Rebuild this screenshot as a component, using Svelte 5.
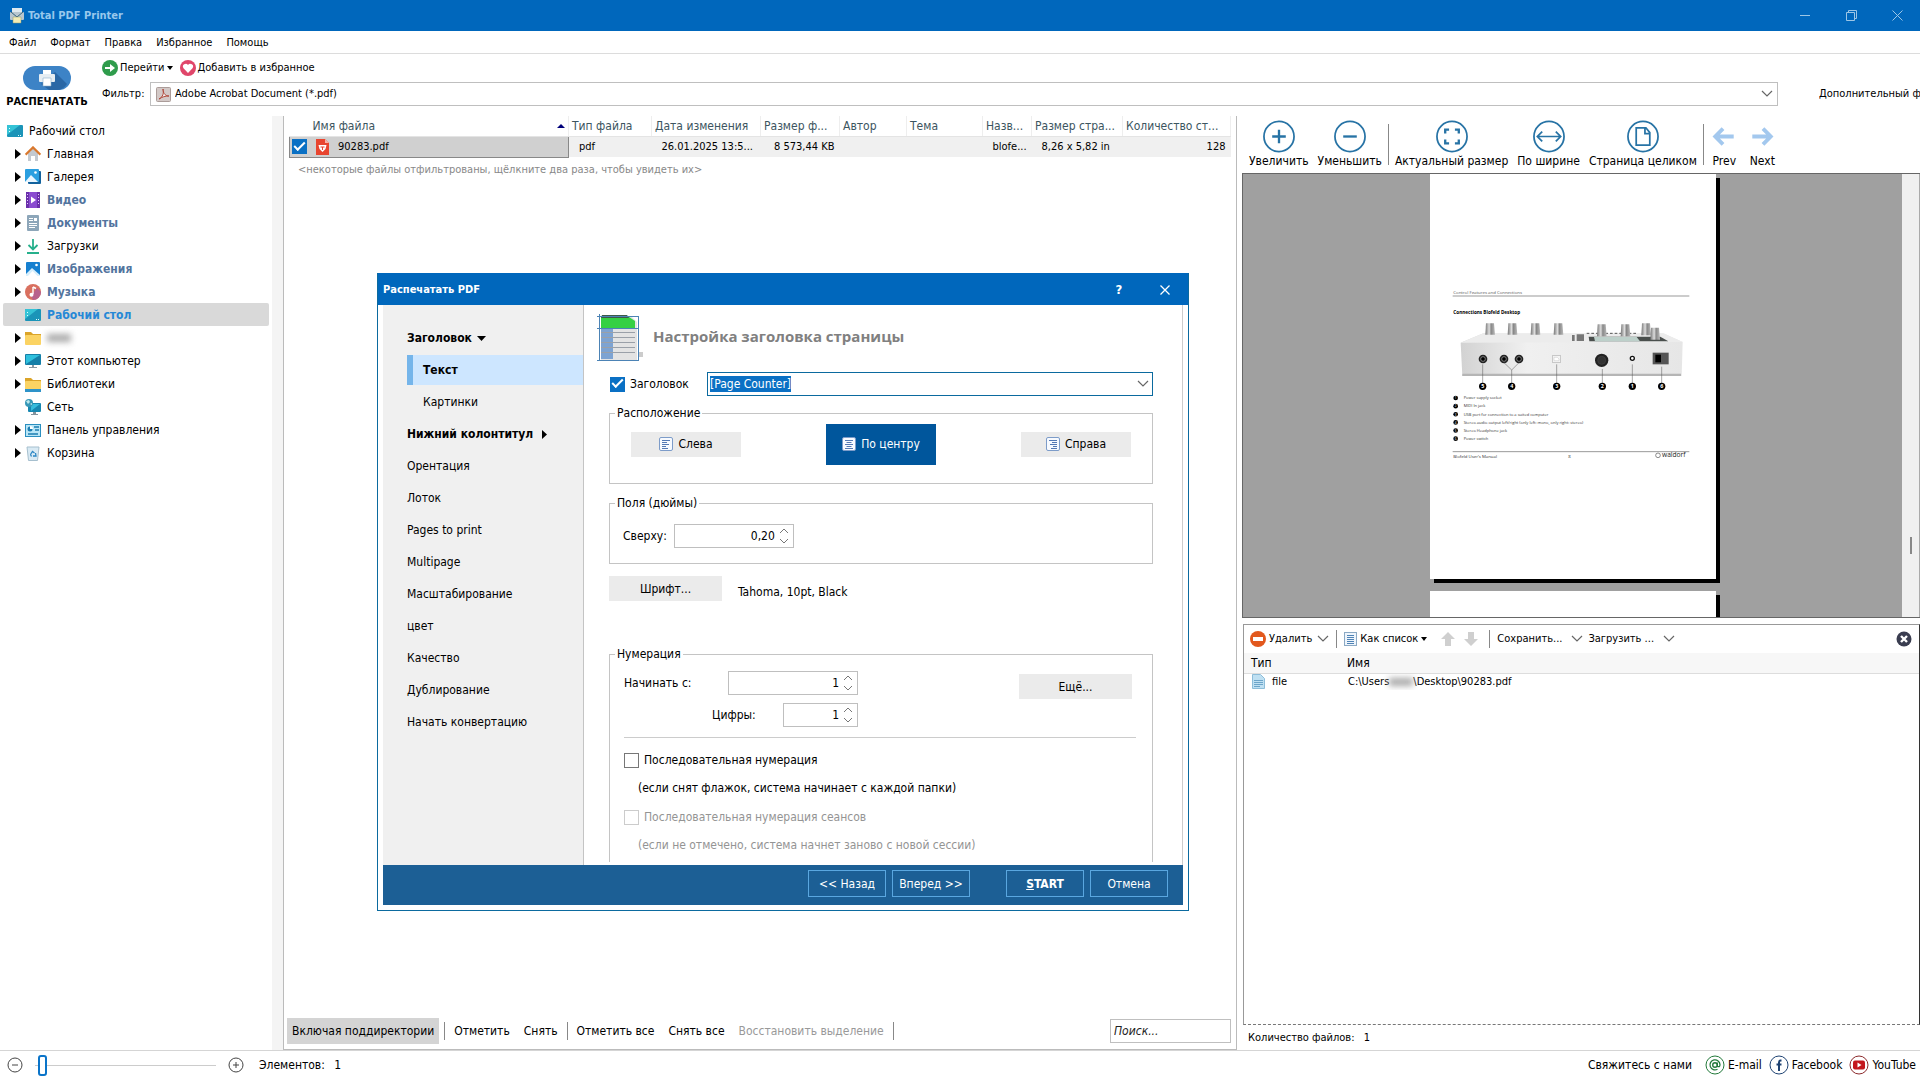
<script lang="ts">
    import { onMount } from 'svelte'

    const menu = ['Файл', 'Формат', 'Правка', 'Избранное', 'Помощь']

    const tree = [
        { label: 'Главная', icon: 'home', arrow: true },
        { label: 'Галерея', icon: 'gallery', arrow: true },
        { label: 'Видео', icon: 'video', arrow: true, bold: true },
        { label: 'Документы', icon: 'docs', arrow: true, bold: true },
        { label: 'Загрузки', icon: 'download', arrow: true },
        { label: 'Изображения', icon: 'image', arrow: true, bold: true },
        { label: 'Музыка', icon: 'music', arrow: true, bold: true },
        { label: 'Рабочий стол', icon: 'desktop', bold: true },
        { label: '', icon: 'folder', arrow: true },
        { label: 'Этот компьютер', icon: 'pc', arrow: true },
        { label: 'Библиотеки', icon: 'library', arrow: true },
        { label: 'Сеть', icon: 'network' },
        { label: 'Панель управления', icon: 'control', arrow: true },
        { label: 'Корзина', icon: 'bin', arrow: true },
    ]

    const pages = [
        'Орентация',
        'Лоток',
        'Pages to print',
        'Multipage',
        'Масштабирование',
        'цвет',
        'Качество',
        'Дублирование',
        'Начать конвертацию',
    ]

    const zoomTools = [
        { label: 'Увеличить', icon: 'plus' },
        { label: 'Уменьшить', icon: 'minus' },
        { label: 'Актуальный размер', icon: 'actual' },
        { label: 'По ширине', icon: 'width' },
        { label: 'Страница целиком', icon: 'page' },
    ]

    const notes = [
        'Power supply socket',
        'MIDI In jack',
        'USB port for connection to a suited computer',
        'Stereo audio output left/right (only left: mono, only right: stereo)',
        'Stereo Headphone jack',
        'Power switch',
    ]

    const callouts = [
        [248, 5, 283],
        [335, 4, 300],
        [470, 3, 283],
        [607, 2, 297],
        [697, 1, 283],
        [785, 6, 290],
    ]

    let selected = $state(7)
    let align = $state('center')
    let header = $state('[Page Counter]')
    let headerInput: HTMLInputElement

    onMount(() => {
        headerInput.focus()
        headerInput.select()
    })
</script>

{#snippet chevron()}
    <svg width="12" height="8" viewBox="0 0 12 8"><path d="M1 1l5 5 5-5" fill="none" stroke="#666" stroke-width="1.2" /></svg>
{/snippet}

{#snippet caret()}
    <svg width="6" height="4" viewBox="0 0 6 4"><path d="M0 0h6L3 4z" fill="#000" /></svg>
{/snippet}

{#snippet treeIcon(name: string)}
    <svg class="ico" width="16" height="16" viewBox="0 0 16 16">
        {#if name == 'home'}
            <path d="M3 7l5-5 5 5v8H10V10H6v5H3z" fill="#c3c9d0" />
            <path d="M0.6 8.6L8 1.4l7.4 7.2" fill="none" stroke="#d9782d" stroke-width="2.2" />
        {:else if name == 'gallery'}
            <rect x="3" y="2" width="13" height="13" rx="1" fill="#12629d" />
            <rect x="0" y="0" width="14" height="13" rx="1" fill="#2b9fe0" />
            <path d="M0 13l6-7 7 7z" fill="#e9f6ff" />
            <circle cx="10.500" cy="3.500" r="1.300" fill="#fff" />
        {:else if name == 'video'}
            <rect x="1" y="0" width="14" height="16" rx="1" fill="#8a4bd0" />
            <path d="M1 0h3v16H1zM12 0h3v16h-3z" fill="#6a30ab" />
            <path d="M2 2h1v1H2zM2 5h1v1H2zM2 8h1v1H2zM2 11h1v1H2zM13 2h1v1h-1zM13 5h1v1h-1zM13 8h1v1h-1zM13 11h1v1h-1z" fill="#e3ccfa" />
            <path d="M6 4.500l5 3.500-5 3.500z" fill="#fff" />
        {:else if name == 'docs'}
            <rect x="2" y="0" width="12" height="16" rx="1" fill="#8da6b9" />
            <path d="M4 3h4v1H4zM4 5h4v1H4zM9 3h3v3H9zM4 8h8v1H4zM4 10h8v1H4zM4 12h6v1H4z" fill="#fff" />
        {:else if name == 'download'}
            <path d="M8 1v10M3.500 7L8 11.500 12.500 7M2 15h12" fill="none" stroke="#26b08c" stroke-width="1.8" />
        {:else if name == 'image'}
            <rect x="1" y="1" width="14" height="14" rx="1" fill="#1680d0" />
            <path d="M1 15v-2l6-6 8 7v1z" fill="#d8effc" />
            <path d="M3 15l4.500-5 5 5z" fill="#fff" />
            <circle cx="11.500" cy="4" r="1.300" fill="#fff" />
        {:else if name == 'music'}
            <circle cx="8" cy="8" r="8" fill="#d9705f" />
            <path d="M8 16a8 8 0 0 0 8-8l-4-4-6 8z" fill="#b7618c" />
            <path d="M8 3v7" stroke="#fff" stroke-width="1.400" />
            <path d="M8 3l3 1.500" stroke="#fff" stroke-width="1.600" />
            <circle cx="6.500" cy="10.800" r="2" fill="#fff" />
        {:else if name == 'desktop'}
            <rect x="0" y="2" width="16" height="12" rx="1" fill="#1b94b8" />
            <path d="M0 3q0-1 1-1h12L0 12z" fill="#35c3d6" />
            <path d="M2 5h1v1H2zM2 8h1v1H2zM11 12h1v1h-1zM13 12h1v1h-1z" fill="#dff" />
        {:else if name == 'folder' || name == 'library'}
            <path d="M0 2h6l2 2h8v10H0z" fill="#dba429" />
            <rect x="0" y="5" width="16" height="10" rx="1" fill="#fbd363" />
            {#if name == 'library'}<rect x="0" y="13" width="16" height="3" fill="#2e93c9" />{/if}
        {:else if name == 'pc'}
            <rect x="0" y="1" width="16" height="11" rx="1" fill="#157fa8" />
            <path d="M1 2h14L1 11z" fill="#2fc0dd" />
            <path d="M7 12h2v2h3v1H4v-1h3z" fill="#8a99a3" />
        {:else if name == 'network'}
            <rect x="3" y="4" width="13" height="9" rx="1" fill="#1787b1" />
            <path d="M6 5h9l-9 7z" fill="#37bcdc" />
            <path d="M8 13h3v2H8zM6 15h7v1H6z" fill="#84949e" />
            <circle cx="4" cy="4" r="4" fill="#3798b8" />
            <path d="M1 2l3-1 1 2-2 2zM5 5l2-1v2z" fill="#bce8ec" />
        {:else if name == 'control'}
            <rect x="0.500" y="2.500" width="15" height="12" fill="#b9e6f7" stroke="#2b8fc0" />
            <circle cx="5" cy="7" r="2.500" fill="#1c7db1" />
            <path d="M5 7V4a3 3 0 0 1 3 3z" fill="#fff" />
            <path d="M9 5h5M10 8h4M3 12h10" stroke="#1c7db1" stroke-width="1.300" />
        {:else}
            <path d="M2 2l1.500 13.500h9L14 2z" fill="#d9eaf4" stroke="#a6bfce" />
            <path d="M5.500 9.500l2-3 2 1.500M10.500 8l.500 3H8M6.500 11.500l-1-2" fill="none" stroke="#2a86c4" stroke-width="1.300" />
        {/if}
    </svg>
{/snippet}

{#snippet printer()}
    <path d="M4 0h8v5H4z" fill="#fff" />
    <rect x="0" y="4" width="16" height="8" rx="1" fill="#e6edf2" />
    <path d="M4 8h8v8H4z" fill="#fff" stroke="#8fb0ca" stroke-width="0.600" />
{/snippet}

{#snippet zoomIcon(name: string)}
    <svg width="34" height="33" viewBox="0 0 34 34" fill="none" stroke="#2773a5" stroke-width="1.800">
        <circle cx="17" cy="17" r="15.500" />
        {#if name == 'plus'}
            <path d="M10 17h14M17 10v14" stroke-width="2.400" />
        {:else if name == 'minus'}
            <path d="M10 17h14" stroke-width="2.400" />
        {:else if name == 'actual'}
            <path d="M10 14v-4h4M20 10h4v4M24 20v4h-4M14 24h-4v-4" stroke-width="2.400" />
        {:else if name == 'width'}
            <path d="M6 17h22M10 12l-5 5 5 5M24 12l5 5-5 5" />
        {:else}
            <path d="M10 8h10l4 5v13H10zM19 8v6h5" />
        {/if}
    </svg>
{/snippet}

{#snippet alignIcon(name: string)}
    <svg width="14" height="14" viewBox="0 0 14 14">
        <rect x="0.500" y="0.500" width="13" height="13" rx="1.500" fill="#f7faff" stroke="#7d9cc9" />
        {#if name == 'left'}
            <path d="M3 3.500h8M3 5.500h5M3 7.500h7M3 9.500h4M3 11.500h6" stroke="#5479b4" />
        {:else if name == 'center'}
            <path d="M3 3.500h8M4.500 5.500h5M3 7.500h8M4.500 9.500h5M3 11.500h8" stroke="#5479b4" />
        {:else}
            <path d="M3 3.500h8M6 5.500h5M4 7.500h7M7 9.500h4M5 11.500h6" stroke="#5479b4" />
        {/if}
    </svg>
{/snippet}

{#snippet spinner(id: string, value: string, size: string)}
    <span class="spin {size}">
        <input {id} type="text" {value} />
        <span class="steps">
            <button aria-label="Больше"><svg width="10" height="6" viewBox="0 0 10 6"><path d="M1 5l4-4 4 4" /></svg></button>
            <button aria-label="Меньше"><svg width="10" height="6" viewBox="0 0 10 6"><path d="M1 1l4 4 4-4" /></svg></button>
        </span>
    </span>
{/snippet}

<div class="app">
    <header class="titlebar">
        <svg width="16" height="16" viewBox="0 0 16 16">
            <path d="M3 0h10v5H3z" fill="#dfe9ef" />
            <rect x="1" y="4" width="14" height="8" rx="1" fill="#b8c6cf" />
            <path d="M2 4l6 5 6-5" fill="none" stroke="#35647f" />
            <path d="M4 9h8v6H4z" fill="#f3ecb5" stroke="#8e9a6c" stroke-width="0.500" />
        </svg>
        <span class="title">Total PDF Printer</span>
        <div class="winbtns">
            <button aria-label="Свернуть"><svg width="11" height="11" viewBox="0 0 11 11"><path d="M0 5.500h10" /></svg></button>
            <button aria-label="Развернуть"><svg width="11" height="11" viewBox="0 0 11 11"><path d="M0.500 2.500h8v8h-8zM2.500 2.500v-2h8v8h-2" /></svg></button>
            <button aria-label="Закрыть"><svg width="11" height="11" viewBox="0 0 11 11"><path d="M0.500 0.500l10 10M10.500 0.500l-10 10" /></svg></button>
        </div>
    </header>

    <nav class="menubar">
        {#each menu as item}
            <button>{item}</button>
        {/each}
    </nav>

    <section class="toolbar">
        <button class="print">
            <svg width="48" height="24" viewBox="0 0 48 24">
                <rect width="48" height="24" rx="12" fill="#3d83c6" />
                <path d="M32 6l12 12q-4 6-10 6h-8l-8-6z" fill="#2a67a5" />
                <g transform="translate(16 4)">{@render printer()}</g>
            </svg>
            <b>РАСПЕЧАТАТЬ</b>
        </button>
        <div class="tools">
            <div class="quick">
                <button>
                    <svg width="16" height="16" viewBox="0 0 16 16"><circle cx="8" cy="8" r="8" fill="#2f9c4c" /><path d="M3 7h5V4l5 4-5 4V9H3z" fill="#fff" /></svg>
                    Перейти {@render caret()}
                </button>
                <button>
                    <svg width="16" height="16" viewBox="0 0 16 16"><circle cx="8" cy="8" r="8" fill="#e0466a" /><path d="M8 13L3.500 8.200a2.700 2.700 0 0 1 4.500-3.200 2.700 2.700 0 0 1 4.500 3.200z" fill="#fff" /></svg>
                    Добавить в избранное
                </button>
            </div>
            <div class="filter">
                <label for="filter">Фильтр:</label>
                <div class="combo">
                    <svg width="15" height="15" viewBox="0 0 15 15">
                        <rect x="0.500" y="0.500" width="14" height="14" rx="1" fill="#d3c9c7" stroke="#ab9c99" />
                        <path d="M3 12c4-2 5-6 4-10 0 5 3 7 6 7-4 0-7 1-10 3z" fill="#f4eeee" stroke="#b04a3c" />
                    </svg>
                    <select id="filter"><option>Adobe Acrobat Document (*.pdf)</option></select>
                    {@render chevron()}
                </div>
                <button class="extra">Дополнительный фильтр</button>
            </div>
        </div>
    </section>

    <main>
        <aside class="tree">
            <button class="root">{@render treeIcon('desktop')}<span>Рабочий стол</span></button>
            {#each tree as item, i}
                <button class:sel={selected == i} class:bold={item.bold} onclick={() => (selected = i)}>
                    <span class="arrow">
                        {#if item.arrow}<svg width="6" height="10" viewBox="0 0 6 10"><path d="M0 0l6 5-6 5z" /></svg>{/if}
                    </span>
                    {@render treeIcon(item.icon)}
                    {#if item.label}<span>{item.label}</span>{:else}<span class="smudge"></span>{/if}
                </button>
            {/each}
        </aside>
        <div class="splitter"></div>

        <section class="files">
            <table>
                <colgroup>
                    <col class="c-name" /><col class="c-type" /><col class="c-date" /><col class="c-size" /><col class="c-author" />
                    <col class="c-theme" /><col class="c-title" /><col class="c-page" /><col />
                </colgroup>
                <thead>
                    <tr>
                        <th>Имя файла <svg width="8" height="4" viewBox="0 0 8 4"><path d="M0 4l4-4 4 4z" fill="#00007a" /></svg></th>
                        <th>Тип файла</th>
                        <th>Дата изменения</th>
                        <th>Размер ф...</th>
                        <th>Автор</th>
                        <th>Тема</th>
                        <th>Назв...</th>
                        <th>Размер стра...</th>
                        <th>Количество ст...</th>
                    </tr>
                </thead>
                <tbody>
                    <tr>
                        <td>
                            <label class="file">
                                <input type="checkbox" class="check" checked />
                                <svg width="13" height="16" viewBox="0 0 13 16">
                                    <path d="M0 0h9l4 4v12H0z" fill="#e8452f" /><path d="M9 0l4 4H9z" fill="#f7b3a8" />
                                    <path d="M2.500 6h8l-1 4-3 3-3-3z" fill="#fff" /><path d="M4.500 8h4M6.500 8v3" stroke="#e8452f" />
                                </svg>
                                90283.pdf
                            </label>
                        </td>
                        <td>pdf</td>
                        <td>26.01.2025 13:5...</td>
                        <td class="num">8 573,44 KB</td>
                        <td></td>
                        <td></td>
                        <td>blofe...</td>
                        <td>8,26 x 5,82 in</td>
                        <td class="num">128</td>
                    </tr>
                </tbody>
            </table>
            <p class="hint">&lt;некоторые файлы отфильтрованы, щёлкните два раза, чтобы увидеть их&gt;</p>

            <div class="listbar">
                <button class="pressed">Включая поддиректории</button>
                <i></i>
                <button>Отметить</button>
                <button>Снять</button>
                <i></i>
                <button>Отметить все</button>
                <button>Снять все</button>
                <button disabled>Восстановить выделение</button>
                <i></i>
                <input type="text" placeholder="Поиск..." aria-label="Поиск" />
            </div>
        </section>

        <section class="side">
            <div class="zoombar">
                {#each zoomTools as tool, i}
                    <button>{@render zoomIcon(tool.icon)}{tool.label}</button>
                    {#if i == 1 || i == 4}<i></i>{/if}
                {/each}
                <button class="step">
                    <svg width="24" height="33" viewBox="0 0 24 34"><path d="M11 9l-8 8 8 8M3 17h19" fill="none" stroke="#a3c8ee" stroke-width="4" /></svg>Prev
                </button>
                <button class="step">
                    <svg width="24" height="33" viewBox="0 0 24 34"><path d="M13 9l8 8-8 8M21 17H2" fill="none" stroke="#a3c8ee" stroke-width="4" /></svg>Next
                </button>
            </div>

            <div class="preview">
                <div class="sheets">
                    <svg class="sheet" width="286" height="405" viewBox="0 0 858 1215">
                        <defs>
                            <linearGradient id="case" x1="0" x2="1"><stop offset="0" stop-color="#d2d2d2" /><stop offset="0.300" stop-color="#f0f0f0" /><stop offset="1" stop-color="#e6e6e6" /></linearGradient>
                            <linearGradient id="knob" x1="0" x2="1"><stop offset="0" stop-color="#777" /><stop offset="0.400" stop-color="#ddd" /><stop offset="0.600" stop-color="#888" /><stop offset="1" stop-color="#bbb" /></linearGradient>
                        </defs>
                        <g transform="translate(-90 288)">
                            <text x="160" y="73" font-size="13" fill="#555">Control Features and Connections</text>
                            <path d="M158 78h710M158 545h710" stroke="#999" stroke-width="3" />
                            <text x="160" y="133" font-size="14" font-weight="bold">Connections Blofeld Desktop</text>
                            <path d="M182 218L250 190h540l58 26-3 102H187z" fill="url(#case)" />
                            <path d="M182 218L250 190h540l58 26z" fill="#ececec" />
                            <path d="M187 311h656v7H187z" fill="#b5b5b5" />
                            {#each [258, 325, 394, 463] as x}
                                <path d="M{x} 160h24l3 34h-29z" fill="url(#knob)" />
                            {/each}
                            <path d="M560 190h150" stroke="#555" stroke-width="3" stroke-dasharray="8 6" />
                            <path d="M516 195h8v18h-8zM530 193h22v20h-22z" fill="#777" />
                            <path d="M566 200h215l24 14H568z" fill="#4a4f4d" />
                            <path d="M582 201h128l10 13H585z" fill="#bdd0ca" />
                            {#each [[593, 163], [664, 163], [726, 160], [753, 173]] as [x, y]}
                                <path d="M{x} {y}h24l3 36h-29z" fill="url(#knob)" />
                            {/each}
                            {#each [249, 312, 357] as x}
                                <circle cx={x} cy="267" r="13" fill="#222" />
                                <circle cx={x} cy="267" r="7" fill="#000" stroke="#aaa" stroke-width="2" />
                            {/each}
                            <rect x="457" y="257" width="25" height="20" fill="#f4f4f4" stroke="#b5b5b5" stroke-width="2" />
                            <path d="M462 272v-10h10l5 5v5z" fill="#fff" stroke="#aaa" />
                            <circle cx="605" cy="271" r="20" fill="#222" />
                            <circle cx="605" cy="271" r="12" fill="#333" stroke="#444" stroke-width="2" />
                            <circle cx="697" cy="265" r="6" fill="#fff" stroke="#111" stroke-width="4" />
                            <rect x="758" y="248" width="48" height="35" fill="#555" />
                            <rect x="766" y="254" width="17" height="23" fill="#000" />
                            <path d="M312 278l23 22 22-22" fill="none" stroke="#555" stroke-width="1.500" />
                            {#each callouts as [x, n, top]}
                                <path d="M{x} {top}V340" stroke="#555" stroke-width="1.500" />
                                <circle cx={x} cy="349" r="11" />
                                <text {x} y="355" font-size="16" font-weight="bold" text-anchor="middle" fill="#fff">{n}</text>
                            {/each}
                            {#each notes as note, i}
                                <circle cx="167" cy={384 + i * 24.4} r="7" />
                                <text x="167" y={388 + i * 24.4} font-size="9" text-anchor="middle" fill="#fff">{i + 1}</text>
                                <text x="191" y={388 + i * 24.4} font-size="12" fill="#333">{note}</text>
                            {/each}
                            <text x="160" y="564" font-size="13" fill="#333">Blofeld User’s Manual</text>
                            <text x="505" y="564" font-size="13" fill="#333">8</text>
                            <circle cx="774" cy="556" r="7" fill="none" stroke="#555" stroke-width="2" />
                            <text x="786" y="562" font-size="20" fill="#222">waldorf</text>
                        </g>
                    </svg>
                    <div class="sheet next"></div>
                </div>
                <div class="scroll"><span></span></div>
            </div>

            <div class="queue">
                <div class="queuebar">
                    <button>
                        <svg width="16" height="16" viewBox="0 0 16 16"><circle cx="8" cy="8" r="8" fill="#e2581d" /><rect x="3" y="6" width="10" height="4" fill="#fff" /></svg>
                        Удалить
                    </button>
                    {@render chevron()}
                    <i></i>
                    <button>
                        <svg width="13" height="14" viewBox="0 0 13 14"><rect x="0.500" y="0.500" width="12" height="13" fill="#eef5fc" stroke="#8ba9c4" /><path d="M3 3.500h7M3 5.500h7M3 7.500h7M3 9.500h7M3 11.500h7" stroke="#4f83b6" /></svg>
                        Как список{@render caret()}
                    </button>
                    <div class="moves">
                        <button aria-label="Вверх"><svg width="14" height="14" viewBox="0 0 14 14"><path d="M7 0l7 7h-4v7H4V7H0z" fill="#cfcfcf" /></svg></button>
                        <button aria-label="Вниз"><svg width="14" height="14" viewBox="0 0 14 14"><path d="M7 14l7-7h-4V0H4v7H0z" fill="#cfcfcf" /></svg></button>
                    </div>
                    <i></i>
                    <button class="drop">Сохранить...</button>
                    {@render chevron()}
                    <button class="drop">Загрузить ...</button>
                    {@render chevron()}
                    <button class="close" aria-label="Закрыть">
                        <svg width="16" height="16" viewBox="0 0 16 16"><circle cx="8" cy="8" r="7.500" fill="#3a3d50" /><path d="M5 5l6 6M11 5l-6 6" stroke="#fff" stroke-width="2.400" /></svg>
                    </button>
                </div>
                <table>
                    <thead><tr><th class="q-type">Тип</th><th>Имя</th></tr></thead>
                    <tbody>
                        <tr>
                            <td>
                                <span class="qfile">
                                    <svg width="13" height="15" viewBox="0 0 13 15"><path d="M0.500 0.500h8l4 4v10h-12z" fill="#bfe0f2" stroke="#8dbdd9" /><path d="M2 6.500h9M2 8.500h9M2 10.500h9M2 12.500h6" stroke="#6da5c9" /></svg>
                                    file
                                </span>
                            </td>
                            <td><span class="path">C:\Users<span class="smudge"></span>\Desktop\90283.pdf</span></td>
                        </tr>
                    </tbody>
                </table>
            </div>
            <p class="count">Количество файлов: <span>1</span></p>
        </section>
    </main>

    <footer class="status">
        <svg width="16" height="16" viewBox="0 0 16 16" fill="none" stroke="#444"><circle cx="8" cy="8" r="7" /><path d="M5 8h6" /></svg>
        <input type="range" min="0" max="100" value="2" aria-label="Масштаб" />
        <svg width="16" height="16" viewBox="0 0 16 16" fill="none" stroke="#444"><circle cx="8" cy="8" r="7" /><path d="M5 8h6M8 5v6" /></svg>
        <span class="items">Элементов: <span>1</span></span>
        <div class="contact">
            <span class="lead">Свяжитесь с нами</span>
            <a href="#email">
                <svg width="20" height="20" viewBox="0 0 20 20"><circle cx="10" cy="10" r="9" fill="#fff" stroke="#237a3b" /><circle cx="10" cy="10" r="2.300" fill="none" stroke="#237a3b" stroke-width="1.400" /><path d="M12.300 7.500v3.700q2.500 1.500 2.700-1.500a5 5 0 1 0-2.500 4.500" fill="none" stroke="#237a3b" stroke-width="1.300" /></svg>
                E-mail
            </a>
            <a href="#facebook">
                <svg width="20" height="20" viewBox="0 0 20 20"><circle cx="10" cy="10" r="9" fill="#fff" stroke="#1e4272" /><path d="M12.500 5.500h-1q-1.500 0-1.500 2V16M7.500 9.500h5" fill="none" stroke="#1e4272" stroke-width="2" /></svg>
                Facebook
            </a>
            <a href="#youtube">
                <svg width="20" height="20" viewBox="0 0 20 20"><circle cx="10" cy="10" r="9" fill="#fff" stroke="#8c2a2c" /><rect x="4" y="5.500" width="12" height="9" rx="2" fill="#c4161c" /><path d="M8.500 7.500l4 2.500-4 2.500z" fill="#fff" /></svg>
                YouTube
            </a>
        </div>
    </footer>

    <div class="dialog" role="dialog" aria-label="Распечатать PDF">
        <div class="caption">
            <b>Распечатать PDF</b>
            <button aria-label="Справка"><b>?</b></button>
            <button aria-label="Закрыть"><svg width="10" height="10" viewBox="0 0 10 10"><path d="M0.500 0.500l9 9M9.500 0.500l-9 9" stroke="#fff" stroke-width="1.300" /></svg></button>
        </div>
        <div class="body">
            <nav>
                <button class="group">Заголовок <svg width="9" height="5" viewBox="0 0 9 5"><path d="M0 0h9L4.500 5z" /></svg></button>
                <button class="sub active">Текст</button>
                <button class="sub">Картинки</button>
                <button class="group wide">Нижний колонтитул <svg width="5" height="9" viewBox="0 0 5 9"><path d="M0 0l5 4.500L0 9z" /></svg></button>
                {#each pages as page}
                    <button>{page}</button>
                {/each}
            </nav>
            <div class="pane">
                <div class="heading">
                    <svg width="47" height="48" viewBox="0 0 47 48">
                        <path d="M4 2h30l6 6v38H4z" fill="#e3e3e3" />
                        <path d="M4 14h12v31H4z" fill="#7da3d2" />
                        <path d="M4 14V3l4-2h21l9 6v7z" fill="#35d044" />
                        <path d="M5 1h25l2 3H4z" fill="#3d5a48" />
                        <path d="M4 18.500h34M4 23.500h34M4 28.500h34M4 33.500h34M4 38.500h34" stroke="#9aa0a8" />
                        <path d="M41 38h5v5h-5z" fill="#ccc" />
                        <path d="M2.500 0v47M41.500 2v45M0 2.500h42M0 14.500h42M0 46.500h42" fill="none" stroke="#4c83b5" />
                    </svg>
                    <h2>Настройка заголовка страницы</h2>
                </div>
                <div class="enable">
                    <label><input type="checkbox" class="check" checked />Заголовок</label>
                    <div class="combo focus">
                        <input type="text" bind:this={headerInput} bind:value={header} aria-label="Текст заголовка" />
                        <button aria-label="Список">{@render chevron()}</button>
                    </div>
                </div>

                <fieldset class="place">
                    <legend>Расположение</legend>
                    <div class="choices">
                        <button class:on={align == 'left'} onclick={() => (align = 'left')}>{@render alignIcon('left')}Слева</button>
                        <button class:on={align == 'center'} onclick={() => (align = 'center')}>{@render alignIcon('center')}По центру</button>
                        <button class:on={align == 'right'} onclick={() => (align = 'right')}>{@render alignIcon('right')}Справа</button>
                    </div>
                </fieldset>

                <fieldset class="margins">
                    <legend>Поля (дюймы)</legend>
                    <div class="margin">
                        <label for="top">Сверху:</label>
                        {@render spinner('top', '0,20', 'mid')}
                    </div>
                </fieldset>

                <div class="font">
                    <button class="flat">Шрифт...</button>
                    <span>Tahoma, 10pt, Black</span>
                </div>

                <fieldset class="numbering">
                    <legend>Нумерация</legend>
                    <div class="inside">
                        <div class="rows">
                            <div class="fields">
                                <div class="line"><label for="start">Начинать с:</label>{@render spinner('start', '1', 'big')}</div>
                                <div class="line"><label for="digits" class="inner">Цифры:</label>{@render spinner('digits', '1', 'small')}</div>
                            </div>
                            <button class="flat">Ещё...</button>
                        </div>
                        <hr />
                        <label class="opt"><input type="checkbox" class="check" />Последовательная нумерация</label>
                        <p>(если снят флажок, система начинает с каждой папки)</p>
                        <label class="opt off"><input type="checkbox" class="check" disabled />Последовательная нумерация сеансов</label>
                        <p class="off">(если не отмечено, система начнет заново с новой сессии)</p>
                    </div>
                </fieldset>
            </div>
        </div>
        <div class="actions">
            <button>&lt;&lt; Назад</button>
            <button>Вперед &gt;&gt;</button>
            <button class="start"><u>S</u>TART</button>
            <button>Отмена</button>
        </div>
    </div>
</div>

<style>
    :global(body) {
        overflow: hidden;
        background: #fff;
    }

    .app {
        position: relative;
        display: flex;
        flex-direction: column;
        height: 100vh;
        overflow: hidden;
        font: 12px/16px 'DejaVu Sans Condensed', 'Noto Sans', sans-serif;
        color: #000;
    }

    .app * {
        box-sizing: border-box;
    }

    button,
    input,
    select {
        font: inherit;
        color: inherit;
    }

    button {
        display: flex;
        align-items: center;
        margin: 0;
        padding: 0;
        border: 0;
        background: none;
        white-space: nowrap;
    }

    svg {
        flex: none;
        display: block;
    }

    p,
    h2 {
        margin: 0;
    }

    .titlebar {
        display: flex;
        align-items: center;
        height: 31px;
        padding-left: 9px;
        background: #0067bc;
    }

    .title {
        margin-left: 3px;
        padding-top: 1px;
        font-weight: bold;
        font-size: 11px;
        color: #98c8ec;
    }

    .winbtns {
        display: flex;
        margin-left: auto;
    }

    .winbtns button {
        width: 46px;
        height: 30px;
        justify-content: center;
    }

    .winbtns path {
        fill: none;
        stroke: #9cc6e6;
    }

    .menubar {
        display: flex;
        gap: 14px;
        height: 23px;
        padding: 2px 0 0 9px;
        border-bottom: 1px solid #dcdcdc;
        font-size: 11px;
    }

    .toolbar {
        display: flex;
        height: 62px;
    }

    .print {
        flex-direction: column;
        gap: 4px;
        width: 94px;
        padding-top: 12px;
        font-size: 11px;
    }

    .tools {
        flex: 1;
        min-width: 0;
        padding: 4px 0 0 8px;
        font-size: 11px;
    }

    .quick {
        display: flex;
        gap: 7px;
        height: 20px;
    }

    .quick button {
        gap: 2px;
    }

    .filter {
        display: flex;
        align-items: center;
        height: 24px;
        margin-top: 4px;
    }

    .filter label {
        width: 48px;
    }

    .combo {
        display: flex;
        align-items: center;
        flex: 1;
        height: 24px;
        padding: 0 4px 0 5px;
        border: 1px solid #bfbfbf;
        background: #fff;
    }

    .combo select {
        flex: 1;
        appearance: none;
        border: 0;
        background: none;
        padding: 0 4px;
        outline: 0;
    }

    .extra {
        width: 101px;
        margin-left: 41px;
        overflow: hidden;
    }

    main {
        display: flex;
        flex: 1;
        min-height: 0;
    }

    .tree {
        width: 272px;
        padding: 3px 3px 0;
    }

    .tree button {
        width: 100%;
        height: 23px;
        padding-left: 12px;
        border-radius: 2px;
        gap: 6px;
    }

    .tree .root {
        padding-left: 4px;
    }

    .tree .arrow {
        width: 4px;
    }

    .tree .bold {
        font-weight: bold;
        color: #52749e;
    }

    .tree .sel {
        background: #d9d9d9;
        color: #2688d6;
    }

    .smudge {
        display: inline-block;
        width: 24px;
        height: 8px;
        background: #aaa;
        filter: blur(3px);
    }

    .splitter {
        width: 12px;
        border-right: 1px solid #bbb;
        background: #f4f4f4;
    }

    .files {
        display: flex;
        flex-direction: column;
        flex: 1;
        min-width: 0;
        padding: 0 5px;
        border-right: 1px solid #bbb;
        border-bottom: 1px solid #bbb;
    }

    table {
        width: 100%;
        table-layout: fixed;
        border-collapse: collapse;
    }

    th {
        font-weight: normal;
        text-align: left;
    }

    th,
    td {
        white-space: nowrap;
        overflow: hidden;
    }

    .files th {
        height: 20px;
        padding: 1px 3px 0;
        color: #3c5560;
        border-right: 1px solid #eee;
        border-bottom: 1px solid #e4e4e4;
    }

    .files th:first-child {
        padding-left: 23px;
    }

    .files th svg {
        float: right;
        margin-top: 6px;
    }

    .files td {
        height: 21px;
        padding: 0 10px;
        background: #f0f0f0;
        font-size: 11px;
    }

    .files td:first-child {
        padding: 0 0 0 2px;
        border: 1px solid #888;
        background: #d0d0d0;
    }

    .files td.num {
        padding: 0 5px;
        text-align: right;
    }

    .c-name { width: 279px; }
    .c-type { width: 83px; }
    .c-date { width: 109px; }
    .c-size { width: 79px; }
    .c-author { width: 67px; }
    .c-theme { width: 76px; }
    .c-title { width: 49px; }
    .c-page { width: 91px; }

    .file {
        display: flex;
        align-items: center;
        gap: 9px;
    }

    .check {
        appearance: none;
        display: grid;
        place-content: center;
        flex: none;
        width: 15px;
        height: 15px;
        margin: 0;
        border: 1px solid #777;
        background: #fff;
    }

    .check:checked {
        border-color: #0a70c4;
        background: #0a70c4;
    }

    .check:checked::after {
        content: '';
        width: 9px;
        height: 4px;
        border-left: 2px solid #fff;
        border-bottom: 2px solid #fff;
        transform: translateY(-2px) rotate(-45deg);
    }

    .check:disabled {
        border-color: #ccc;
    }

    .hint {
        padding: 4px 9px;
        font-size: 11px;
        color: #888;
    }

    .listbar {
        display: flex;
        align-items: center;
        height: 36px;
        margin: auto 0 0 -2px;
    }

    .listbar button {
        height: 26px;
        padding: 0 7px;
    }

    .listbar button:disabled {
        color: #999;
    }

    .listbar .pressed {
        margin-right: 3px;
        padding: 0 5px;
        background: #d4d4d4;
    }

    .listbar input {
        width: 121px;
        height: 24px;
        margin-left: auto;
        padding: 0 3px;
        border: 1px solid #bfbfbf;
        font-style: italic;
    }

    .listbar input::placeholder {
        color: #222;
    }

    i {
        width: 1px;
        height: 18px;
        margin: 0 2px;
        background: #888;
    }

    .side {
        display: flex;
        flex-direction: column;
        width: 683px;
        padding-left: 5px;
    }

    .zoombar {
        display: flex;
        gap: 9px;
        height: 57px;
        padding: 4px 0 0 7px;
    }

    .zoombar button {
        flex-direction: column;
        font-size: 12px;
    }

    .zoombar .step {
        width: 29px;
    }

    .zoombar i {
        height: 41px;
        margin: 4px -3px 0;
    }

    .preview {
        display: flex;
        height: 445px;
        border: 1px solid #666;
        border-right: 0;
        background: #a0a0a0;
        overflow: hidden;
    }

    .sheets {
        display: flex;
        flex-direction: column;
        align-items: center;
        gap: 12px;
        flex: 1;
    }

    .sheet {
        flex: none;
        background: #fff;
        box-shadow: 4px 4px #000;
        font-family: 'Open Sans', 'Noto Sans', sans-serif;
    }

    .next {
        width: 286px;
        height: 80px;
    }

    .scroll {
        width: 18px;
        border-right: 1px solid #aaa;
        background: #f0f0f0;
    }

    .scroll span {
        display: block;
        width: 2px;
        height: 17px;
        margin: 363px 0 0 8px;
        background: #888;
    }

    .queue {
        flex: 1;
        margin: 6px 0 0 1px;
        border: 1px solid #999;
        border-right-color: #333;
        border-bottom: 1px dashed #777;
    }

    .queuebar {
        display: flex;
        align-items: center;
        gap: 5px;
        height: 28px;
        padding: 0 7px 0 6px;
    }

    .queuebar button {
        gap: 3px;
        font-size: 11px;
    }

    .moves {
        display: flex;
        gap: 9px;
        margin: 0 4px 0 9px;
    }

    .queuebar .drop {
        margin-right: 4px;
    }

    .queuebar .close {
        margin-left: auto;
    }

    .queue th {
        height: 20px;
        padding: 0 7px;
        background: #f7f7f7;
        border-bottom: 1px solid #ddd;
    }

    .queue .q-type {
        width: 96px;
    }

    .queue td {
        padding: 0 8px;
        font-size: 11px;
    }

    .qfile,
    .path {
        display: flex;
        align-items: center;
        gap: 7px;
    }

    .path {
        gap: 0;
    }

    .count {
        padding: 5px 6px 4px;
        font-size: 11px;
    }

    .count span,
    .items span {
        margin-left: 6px;
    }

    .status {
        display: flex;
        align-items: center;
        height: 30px;
        padding: 0 4px 1px 7px;
        border-top: 1px solid #d5d5d5;
    }

    .status input {
        appearance: none;
        width: 181px;
        height: 22px;
        margin: 0 12px;
        background: linear-gradient(#ccc, #ccc) center / 100% 1px no-repeat;
    }

    .status input::-webkit-slider-thumb {
        appearance: none;
        width: 9px;
        height: 21px;
        border: 2px solid #0a74c9;
        border-radius: 3px;
        background: #fff;
    }

    .items {
        margin-left: 15px;
    }

    .contact {
        display: flex;
        align-items: center;
        gap: 7px;
        margin-left: auto;
    }

    .contact .lead {
        margin-right: 6px;
    }

    .contact a {
        display: flex;
        align-items: center;
        gap: 3px;
        color: inherit;
        text-decoration: none;
    }

    .dialog {
        position: absolute;
        left: 377px;
        top: 273px;
        width: 812px;
        padding: 0 5px 5px;
        border: 1px solid #0b6a9f;
        border-top: 0;
        background: #fff;
    }

    .caption {
        display: flex;
        align-items: center;
        height: 32px;
        margin: 0 -5px;
        padding: 2px 0 0 5px;
        background: #0067bc;
        color: #fff;
        font-size: 11px;
    }

    .caption button {
        width: 46px;
        height: 30px;
        justify-content: center;
    }

    .caption button:first-of-type {
        margin-left: auto;
        font-size: 13px;
    }

    .body {
        display: flex;
        height: 560px;
        border-right: 1px solid #ccc;
        overflow: hidden;
    }

    .body nav {
        width: 201px;
        padding: 17px 0 0 24px;
        border-right: 1px solid #c4c4c4;
        background: #f0f0f0;
    }

    .body nav button {
        width: 100%;
        height: 32px;
    }

    .body nav .group {
        gap: 5px;
        font-weight: bold;
    }

    .body nav .wide {
        gap: 9px;
    }

    .body nav .sub {
        padding-left: 16px;
    }

    .body nav .active {
        height: 30px;
        margin: 1px 0;
        padding-left: 10px;
        border-left: 6px solid #75b5ea;
        background: #cde6ff;
        font-weight: bold;
    }

    .pane {
        flex: 1;
        padding: 9px 29px 0 25px;
    }

    .heading {
        display: flex;
        align-items: center;
        gap: 9px;
        margin-left: -12px;
        height: 48px;
    }

    h2 {
        padding-bottom: 4px;
        font: bold 15px/22px 'Open Sans', 'Noto Sans', sans-serif;
        color: #808080;
    }

    .enable {
        display: flex;
        align-items: center;
        margin-top: 10px;
        padding-left: 1px;
    }

    .enable label,
    .opt {
        display: flex;
        align-items: center;
        gap: 5px;
    }

    .enable label {
        width: 97px;
    }

    .focus {
        height: 24px;
        padding: 0 3px 0 2px;
        border-color: #0b6a9f;
    }

    .focus input {
        flex: 1;
        padding: 0;
        border: 0;
        outline: 0;
    }

    .focus input::selection {
        background: #0a70c4;
        color: #fff;
    }

    fieldset {
        margin: 0;
        padding: 0;
        border: 1px solid #c4c4c4;
    }

    legend {
        height: 16px;
        margin-left: 5px;
        padding: 0 2px;
    }

    .place {
        height: 79px;
        margin-top: 9px;
    }

    .choices {
        display: flex;
        justify-content: space-between;
        align-items: center;
        height: 46px;
        padding: 0 21px;
    }

    .choices button,
    .flat {
        gap: 5px;
        width: 110px;
        height: 25px;
        justify-content: center;
        background: #ebebeb;
    }

    .choices .on {
        height: 41px;
        background: #00569c;
        color: #fff;
    }

    .margins {
        height: 69px;
        margin-top: 11px;
    }

    .margin {
        display: flex;
        align-items: center;
        gap: 7px;
        height: 52px;
        padding: 0 13px 2px;
    }

    .spin {
        display: flex;
        height: 24px;
        border: 1px solid #bfbfbf;
        background: #fff;
    }

    .spin.mid {
        width: 120px;
    }

    .spin.big {
        width: 130px;
    }

    .spin.small {
        width: 75px;
    }

    .spin input {
        flex: 1;
        min-width: 0;
        padding: 0 4px 0 0;
        border: 0;
        text-align: right;
        background: none;
    }

    .steps {
        display: flex;
        flex-direction: column;
        justify-content: center;
        gap: 4px;
        width: 14px;
    }

    .steps path {
        fill: none;
        stroke: #777;
    }

    .font {
        display: flex;
        align-items: center;
        gap: 16px;
        margin-top: 12px;
    }

    .flat {
        width: 113px;
    }

    .font span {
        padding-top: 7px;
    }

    .numbering {
        height: 216px;
        margin-top: 45px;
        border-bottom: 0;
    }

    .inside {
        padding: 9px 14px 0;
    }

    .rows {
        display: flex;
        justify-content: space-between;
        align-items: flex-start;
        padding: 0 6px 0 0;
    }

    .rows .flat {
        margin-top: 3px;
    }

    .line {
        display: flex;
        align-items: center;
        justify-content: space-between;
        width: 234px;
        height: 24px;
        margin-bottom: 8px;
    }

    .line .inner {
        margin-left: 88px;
    }

    hr {
        height: 1px;
        margin: 2px 2px 14px 0;
        border: 0;
        background: #ccc;
    }

    .numbering p {
        padding: 12px 0 12px 14px;
        line-height: 17px;
    }

    .off {
        color: #949494;
    }

    .actions {
        display: flex;
        gap: 6px;
        height: 40px;
        padding: 5px 15px;
        justify-content: flex-end;
        background: #1c5f95;
        color: #fff;
    }

    .actions button {
        width: 78px;
        height: 27px;
        justify-content: center;
        border: 1px solid #5aa7e0;
    }

    .actions .start {
        margin-left: 30px;
        font-weight: bold;
    }
</style>
